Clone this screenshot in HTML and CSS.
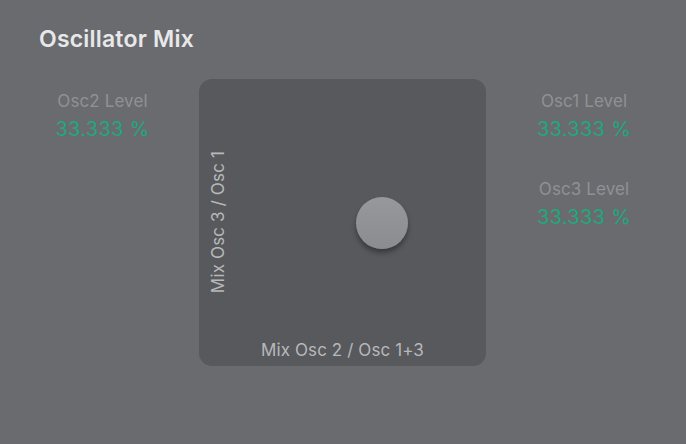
FILE: index.html
```html
<!DOCTYPE html>
<html>
<head>
<meta charset="utf-8">
<link rel="stylesheet" href="styles.css">
</head>
<body>
<div class="panel">
  <h1 class="title">Oscillator Mix</h1>
  <div class="row">
    <div class="col col-left">
      <div class="param">
        <div class="param-label">Osc2 Level</div>
        <div class="param-value">33.333 %</div>
      </div>
    </div>
    <div class="pad">
      <div class="pad-vlabel">Mix Osc 3 / Osc 1</div>
      <div class="knob"></div>
      <div class="pad-hlabel">Mix Osc 2 / Osc 1+3</div>
    </div>
    <div class="col col-right">
      <div class="param">
        <div class="param-label">Osc1 Level</div>
        <div class="param-value">33.333 %</div>
      </div>
      <div class="param">
        <div class="param-label">Osc3 Level</div>
        <div class="param-value">33.333 %</div>
      </div>
    </div>
  </div>
</div>
</body>
</html>
```
FILE: styles.css
```css
html, body {
  margin: 0;
  padding: 0;
}
body {
  width: 686px;
  height: 444px;
  background: #6a6b6f;
  font-family: Inter, "Liberation Sans", sans-serif;
  overflow: hidden;
}
.panel {
  padding-top: 24px;
}
.title {
  margin: 0 0 0 39px;
  font-size: 23px;
  line-height: 30px;
  font-weight: 600;
  color: #e8e8ea;
  letter-spacing: 0.2px;
}
.row {
  display: grid;
  grid-template-columns: 199px 287px 1fr;
  margin-top: 25px;
}
.col {
  display: flex;
  flex-direction: column;
  align-items: center;
  padding-top: 12px;
  gap: 38px;
}
.col-left {
  padding-left: 6px;
}
.col-right {
  padding-right: 4px;
}
.param {
  display: flex;
  flex-direction: column;
  align-items: center;
}
.param-label {
  font-size: 17px;
  line-height: 20px;
  color: #909195;
  letter-spacing: 0.1px;
}
.param-value {
  font-size: 20px;
  line-height: 24px;
  margin-top: 6px;
  color: #1fa87b;
  letter-spacing: 0.3px;
}
.pad {
  position: relative;
  height: 287px;
  background: #58595c;
  border-radius: 13px;
  display: flex;
  flex-direction: column;
  justify-content: flex-end;
  align-items: center;
  padding-bottom: 6px;
  box-sizing: border-box;
}
.pad-hlabel {
  font-size: 17px;
  line-height: 20px;
  color: #b7b8bb;
  letter-spacing: 0.1px;
}
.pad-vlabel {
  position: absolute;
  left: 9px;
  top: 72px;
  writing-mode: vertical-rl;
  transform: rotate(180deg);
  font-size: 17px;
  line-height: 20px;
  color: #b7b8bb;
  letter-spacing: 0.15px;
}
.knob {
  position: absolute;
  left: 157px;
  top: 118px;
  width: 52px;
  height: 52px;
  border-radius: 50%;
  background: linear-gradient(#97989c, #8b8c90);
  box-shadow: 0 4px 5px rgba(0,0,0,0.35);
}
```
